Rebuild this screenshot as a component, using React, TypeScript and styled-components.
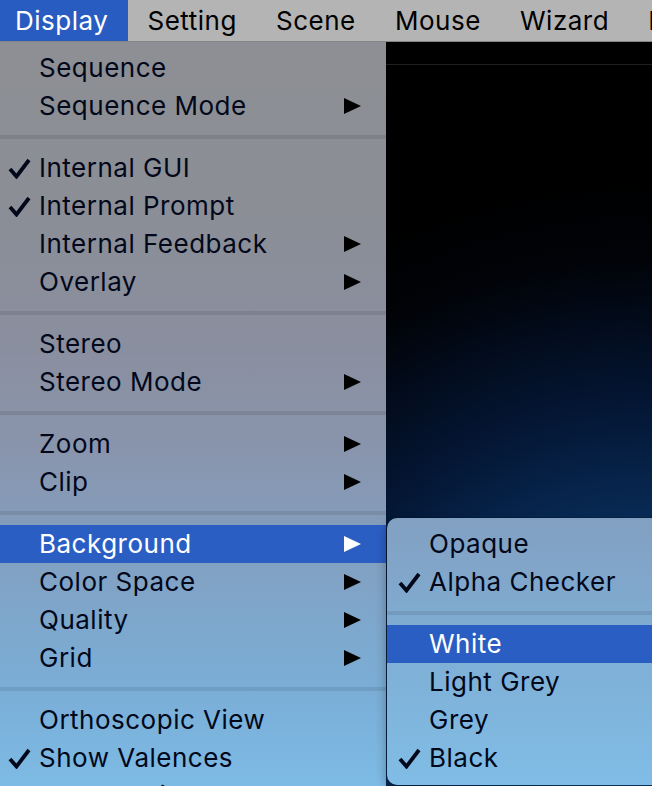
import React from "react";
import styled, { createGlobalStyle } from "styled-components";

const Global = createGlobalStyle`
  html, body { margin: 0; padding: 0; background: #000; overflow: hidden; }
  * { box-sizing: border-box; }
`;

const FONT = `"Inter", "Liberation Sans", Arial, sans-serif`;

const Screen = styled.div`
  width: 652px;
  height: 786px;
  display: flex;
  flex-direction: column;
  overflow: hidden;
  font-family: ${FONT};
  font-size: 26px;
  letter-spacing: 0.5px;
  color: #000;
`;

const MenuBar = styled.div`
  height: 42px;
  flex: none;
  display: flex;
  align-items: stretch;
  background: #b4b4b4;
  border-bottom: 1px solid #858585;
  white-space: nowrap;
`;

const BarItem = styled.div<{ $active?: boolean; $first?: boolean }>`
  display: flex;
  align-items: center;
  flex: none;
  padding: 0 19.6px 0 ${(p) => (p.$first ? "15px" : "19.6px")};
  background: ${(p) => (p.$active ? "#295cc1" : "transparent")};
  color: ${(p) => (p.$active ? "#fff" : "#000")};
`;

const Workspace = styled.div`
  flex: 1;
  position: relative;
  display: flex;
  flex-direction: column;
  background: #000;
`;

const TopStrip = styled.div`
  height: 23px;
  flex: none;
  background: #000;
  border-bottom: 1px solid #1f1f1f;
`;

const Viewport = styled.div`
  flex: 1;
  background: radial-gradient(ellipse 95% 80% at 100% 95%, #0f4f8e 0%, #0a3566 30%, #041634 60%, #010308 85%, #000 100%);
`;

const Menu = styled.div`
  position: absolute;
  left: 0;
  top: 0;
  width: 386px;
  height: 800px;
  padding-top: 7px;
  display: flex;
  flex-direction: column;
  background: linear-gradient(
    to bottom,
    #8d8f94 0px,
    #8b8e95 160px,
    #8a8fa0 310px,
    #8995ad 410px,
    #7fa5c9 560px,
    #7aafd8 660px,
    #7dbbe5 744px
  );
`;

const SubMenu = styled.div`
  position: absolute;
  left: 387px;
  top: 476px;
  width: 290px;
  height: 267px;
  padding-top: 7px;
  display: flex;
  flex-direction: column;
  border-radius: 10px;
  overflow: hidden;
  box-shadow: 0 0 0 1px rgba(0, 0, 0, 0.12), -2px 4px 10px rgba(0, 0, 0, 0.25);
  background: linear-gradient(to bottom, #82a0c2 0%, #7fadd3 45%, #80bde6 100%);
`;

const Row = styled.div<{ $hl?: boolean; $pad: number }>`
  position: relative;
  height: 38px;
  flex: none;
  display: flex;
  align-items: center;
  padding-left: ${(p) => p.$pad}px;
  padding-right: 25px;
  white-space: nowrap;
  background: ${(p) => (p.$hl ? "#2b5ec3" : "transparent")};
  color: ${(p) => (p.$hl ? "#fff" : "#02081a")};
`;

const Label = styled.span`
  flex: 1;
  line-height: 38px;
`;

const CheckBox = styled.span<{ $left: number }>`
  position: absolute;
  left: ${(p) => p.$left}px;
  top: 9px;
  width: 23px;
  height: 21px;
  display: flex;
`;

const Arrow = styled.span<{ $hl?: boolean }>`
  width: 0;
  height: 0;
  border-top: 8px solid transparent;
  border-bottom: 8px solid transparent;
  border-left: 17px solid ${(p) => (p.$hl ? "#fff" : "#000")};
`;

const Separator = styled.div`
  height: 24px;
  flex: none;
  display: flex;
  align-items: center;
  &::after {
    content: "";
    display: block;
    width: 100%;
    height: 4px;
    background: rgba(0, 0, 0, 0.09);
  }
`;

const Check = ({ color }: { color: string }) => (
  <svg width="23" height="21" viewBox="0 0 23 21">
    <path
      d="M2 11 L8.5 18.5 L21 2"
      fill="none"
      stroke={color}
      strokeWidth="3.8"
      strokeLinecap="butt"
      strokeLinejoin="miter"
    />
  </svg>
);

type Item = { label?: string; sub?: boolean; check?: boolean; hl?: boolean; sep?: boolean };

const mainItems: Item[] = [
  { label: "Sequence" },
  { label: "Sequence Mode", sub: true },
  { sep: true },
  { label: "Internal GUI", check: true },
  { label: "Internal Prompt", check: true },
  { label: "Internal Feedback", sub: true },
  { label: "Overlay", sub: true },
  { sep: true },
  { label: "Stereo" },
  { label: "Stereo Mode", sub: true },
  { sep: true },
  { label: "Zoom", sub: true },
  { label: "Clip", sub: true },
  { sep: true },
  { label: "Background", sub: true, hl: true },
  { label: "Color Space", sub: true },
  { label: "Quality", sub: true },
  { label: "Grid", sub: true },
  { sep: true },
  { label: "Orthoscopic View" },
  { label: "Show Valences", check: true },
  { label: "Smooth Lines", check: true },
];

const subItems: Item[] = [
  { label: "Opaque" },
  { label: "Alpha Checker", check: true },
  { sep: true },
  { label: "White", hl: true },
  { label: "Light Grey" },
  { label: "Grey" },
  { label: "Black", check: true },
];

const MenuRows = ({ items, pad, checkLeft }: { items: Item[]; pad: number; checkLeft: number }) => (
  <>
    {items.map((it, i) =>
      it.sep ? (
        <Separator key={i} />
      ) : (
        <Row key={i} $hl={it.hl} $pad={pad}>
          {it.check && (
            <CheckBox $left={checkLeft}>
              <Check color={it.hl ? "#fff" : "#02081a"} />
            </CheckBox>
          )}
          <Label>{it.label}</Label>
          {it.sub && <Arrow $hl={it.hl} />}
        </Row>
      )
    )}
  </>
);

export default function App() {
  return (
    <Screen>
      <Global />
      <MenuBar>
        <BarItem $active $first>Display</BarItem>
        <BarItem>Setting</BarItem>
        <BarItem>Scene</BarItem>
        <BarItem>Mouse</BarItem>
        <BarItem>Wizard</BarItem>
        <BarItem>Plugin</BarItem>
      </MenuBar>
      <Workspace>
        <TopStrip />
        <Viewport />
        <Menu>
          <MenuRows items={mainItems} pad={39} checkLeft={8} />
        </Menu>
        <SubMenu>
          <MenuRows items={subItems} pad={42} checkLeft={11} />
        </SubMenu>
      </Workspace>
    </Screen>
  );
}
